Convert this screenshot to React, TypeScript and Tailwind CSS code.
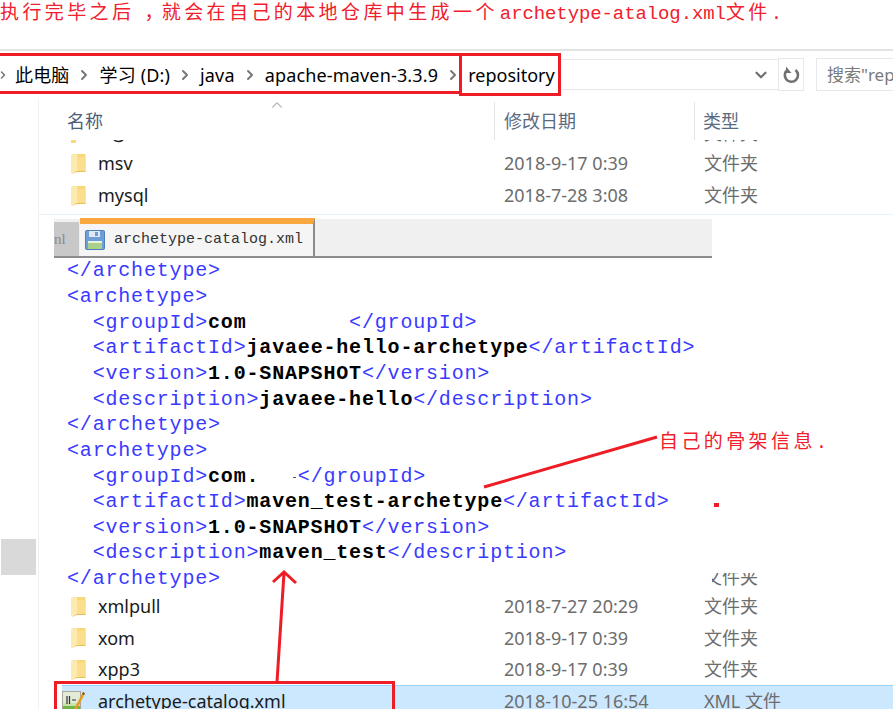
import React from 'react';
import { ChevronDown, ChevronRight, ChevronUp } from 'lucide-react';

const uiFont = "font-['Noto_Sans','Noto_Sans_CJK_SC',sans-serif]";
const noteFont = "font-['Liberation_Mono','Noto_Sans_CJK_SC',monospace]";

const FolderIcon = () => (
  <svg width="15" height="22" viewBox="0 0 15 22" className="shrink-0">
    <path d="M0 2 L3 1 H14.5 V19 H3 Z" fill="#f8d878" />
    <path d="M0 2 L6 1 V18 L1 21 L0 20 Z" fill="#fdeab0" />
    <path d="M6 4 H14.5 V18 H6 Z" fill="#fbdf8f" />
    <path d="M1 21 L6 18 H14.5 V19 H6 Z" fill="#e9bd58" />
  </svg>
);

const XmlIcon = () => (
  <svg width="24" height="24" viewBox="0 0 24 24" className="shrink-0">
    <rect x="0.5" y="1.5" width="18" height="22" fill="#e4ead8" stroke="#a8a89a" />
    <rect x="1" y="16" width="17" height="7" fill="#6db544" />
    <rect x="1" y="13" width="17" height="3" fill="#c9e2a8" />
    <path d="M5 6 V14 M7.5 6 V14 M10 10 H14" stroke="#333" strokeWidth="1.2" />
    <path d="M12 19 L21 2 L23 3.5 L14 21 Z" fill="#e79a24" />
    <path d="M21 2 L23 3.5 L22 5 L20 4 Z" fill="#7a5a2a" />
  </svg>
);

const SaveIcon = () => (
  <svg width="20" height="20" viewBox="0 0 20 20" className="shrink-0">
    <rect x="0.5" y="0.5" width="19" height="19" rx="1" fill="#6f9ed6" stroke="#4f7fb8" />
    <rect x="4" y="1" width="11" height="6" fill="#dfe9f5" />
    <rect x="10" y="2" width="3" height="4" fill="#6f9ed6" />
    <rect x="3" y="11" width="14" height="8" fill="#a9d18c" />
    <rect x="3" y="11" width="14" height="2" fill="#eaf3e0" />
  </svg>
);

const RefreshIcon = () => (
  <svg width="18" height="18" viewBox="0 0 18 18">
    <path d="M6 3.5 A6.6 6.6 0 1 0 13.5 4" stroke="#707070" strokeWidth="2.6" fill="none" />
    <path d="M4 0.5 V7 H9.5 Z" fill="#707070" />
  </svg>
);

type RowProps = { name: string; date: string; type: string; icon?: React.ReactNode };

const FileRow = ({ name, date, type, icon }: RowProps) => (
  <div className="flex items-center h-[31.7px]">
    <div className="w-[47px] shrink-0 flex justify-end">{icon || <FolderIcon />}</div>
    <div className="w-[412px] pl-[12px] text-[18px] text-[#1a1a1a] shrink-0">{name}</div>
    <div className="w-[200px] text-[18px] text-[#6d6d6d] shrink-0 pl-[6px]">{date}</div>
    <div className="text-[18px] text-[#6d6d6d] pl-[6px] whitespace-nowrap">{type}</div>
  </div>
);

const Tag = ({ children }: { children: React.ReactNode }) => <span className="text-[#3a3aff]">{children}</span>;
const Val = ({ children }: { children: React.ReactNode }) => <span className="font-bold text-black">{children}</span>;

const codeLines: React.ReactNode[] = [
  <Tag>{'</archetype>'}</Tag>,
  <Tag>{'<archetype>'}</Tag>,
  <><Tag>{'  <groupId>'}</Tag><Val>{'com'}</Val>{'        '}<Tag>{'</groupId>'}</Tag></>,
  <><Tag>{'  <artifactId>'}</Tag><Val>{'javaee-hello-archetype'}</Val><Tag>{'</artifactId>'}</Tag></>,
  <><Tag>{'  <version>'}</Tag><Val>{'1.0-SNAPSHOT'}</Val><Tag>{'</version>'}</Tag></>,
  <><Tag>{'  <description>'}</Tag><Val>{'javaee-hello'}</Val><Tag>{'</description>'}</Tag></>,
  <Tag>{'</archetype>'}</Tag>,
  <Tag>{'<archetype>'}</Tag>,
  <><Tag>{'  <groupId>'}</Tag><Val>{'com.'}</Val>{'   '}<Tag>{'</groupId>'}</Tag></>,
  <><Tag>{'  <artifactId>'}</Tag><Val>{'maven_test-archetype'}</Val><Tag>{'</artifactId>'}</Tag></>,
  <><Tag>{'  <version>'}</Tag><Val>{'1.0-SNAPSHOT'}</Val><Tag>{'</version>'}</Tag></>,
  <><Tag>{'  <description>'}</Tag><Val>{'maven_test'}</Val><Tag>{'</description>'}</Tag></>,
  <Tag>{'</archetype>'}</Tag>,
];

const Crumb = ({ text }: { text: string }) => (
  <>
    <span className="text-black whitespace-nowrap tracking-[0.16px]">{text}</span>
    <ChevronRight size={16} strokeWidth={3} className="text-[#777] mx-[7px] shrink-0" />
  </>
);

export default function App() {
  return (
    <div className={`relative w-[893px] h-[709px] overflow-hidden bg-white ${uiFont}`}>
      {/* 顶部说明 */}
      <div className={`h-[49px] pt-[1px] text-[#f0202c] text-[19px] leading-[26px] whitespace-nowrap ${noteFont}`}>
        <span className="tracking-[3.4px]">执行完毕之后</span>
        <span className="tracking-[3.4px] ml-[10px]">，</span>
        <span className="tracking-[3.4px] -ml-[5px]">就会在自己的本地仓库中生成一个</span>
        <span className="tracking-[-0.1px] ml-[2px]">archetype-atalog.xml</span>
        <span className="tracking-[3.4px]">文件.</span>
      </div>

      {/* 地址栏 */}
      <div className="h-[50px] border-t-2 border-[#e3e3e3] flex items-center text-[18px]">
        <ChevronRight size={12} strokeWidth={3} className="text-[#777] -ml-[3px] mr-[6px] shrink-0" />
        <Crumb text="此电脑" />
        <Crumb text="学习 (D:)" />
        <Crumb text="java" />
        <Crumb text="apache-maven-3.3.9" />
        <div className="w-[300px] h-[32px] shrink-0 flex items-center">
          <span className="text-black">repository</span>
        </div>
      </div>

      {/* 内容区 */}
      <div className="flex">
        <div className="w-[39px] shrink-0 border-r border-[#f0f0f0] h-[610px] pt-[440px]">
          <div className="ml-[1px] w-[35px] h-[36px] bg-[#d9d9d9]" />
        </div>
        <div className="flex-1 min-w-0">
          {/* 表头 */}
          <div className="relative flex h-[41px] items-center text-[18px] text-[#4c607a] pt-[3px]">
            <div className="w-[455px] pl-[28px]">名称</div>
            <div className="w-[200px] pl-[9px] h-[38px] flex items-center border-l border-[#e5e5e5] text-[#5a6b80]">修改日期</div>
            <div className="pl-[8px] h-[38px] flex items-center border-l border-[#e5e5e5] text-[#5a6b80]">类型</div>
            <ChevronUp size={18} strokeWidth={1.5} className="absolute left-[229px] top-[-3px] text-[#bbbbbb]" />
          </div>
          {/* 被表头遮住的一行 */}
          <div className="flex h-[8px] overflow-hidden">
            <svg width="100" height="8" className="shrink-0 ml-[32px]">
              <rect x="0" y="0" width="5" height="3" fill="#f8d878" />
              <path d="M43 0 Q47 3 52 0" stroke="#222" strokeWidth="1.5" fill="none" />
            </svg>
            <div className="ml-[533px] text-[18px] leading-[18px] -mt-[16px] text-[#6d6d6d]">文件夹</div>
          </div>
          <FileRow name="msv" date="2018-9-17 0:39" type="文件夹" />
          <FileRow name="mysql" date="2018-7-28 3:08" type="文件夹" />
          <div className="h-[4px] border-b border-[#e8f2fb]" />
          <div className="h-[4px]" />

          {/* 编辑器 */}
          <div className="flex -mb-[1px]">
            <div className="relative z-10 ml-[15px] w-[658px] shrink-0">
              <div className="flex h-[39px] bg-[#f0f0f0] border-b-2 border-[#8c8c8c] items-end">
                <div className="w-[25px] h-[34px] bg-[#c8c8c8] text-[#8a8a8a] text-[15px] flex items-center font-['Liberation_Serif',serif]">nl</div>
                <div className="ml-[1px] w-[235px] h-[38px] bg-[#f5f5f5] border-t-[6px] border-[#f9a73e] border-r-2 border-r-[#8c8c8c] flex items-center pl-[5px] gap-[9px]">
                  <SaveIcon />
                  <span className={`text-[15px] text-[#333] ${noteFont}`}>archetype-catalog.xml</span>
                </div>
              </div>
              <div className="bg-white pl-[13px]">
                {codeLines.map((line, i) => (
                  <div key={i} className="relative h-[25.65px] leading-[25.65px] whitespace-pre text-[20px] tracking-[0.82px] font-['Liberation_Mono',monospace]">
                    {line}
                    {i === 8 && <span className="absolute left-[226px] top-[13px] w-[3px] h-[1px] bg-[#555]" />}
                  </div>
                ))}
              </div>
            </div>
            <div className="flex-1 flex flex-col justify-end items-start pb-[6px]">
              <div className="h-[13px] overflow-hidden -ml-[8px] whitespace-nowrap">
                <div className="text-[18px] leading-[18px] -mt-[5px] text-[#6d6d6d]">文件夹</div>
              </div>
            </div>
          </div>

          <FileRow name="xmlpull" date="2018-7-27 20:29" type="文件夹" />
          <FileRow name="xom" date="2018-9-17 0:39" type="文件夹" />
          <FileRow name="xpp3" date="2018-9-17 0:39" type="文件夹" />
          <div className="relative">
            <div className="absolute left-[23px] right-0 -top-[1px] h-[40px] bg-[#cce8ff] border-t border-[#99d1ff]" />
            <div className="relative">
              <FileRow name="archetype-catalog.xml" date="2018-10-25 16:54" type="XML 文件" icon={<XmlIcon />} />
            </div>
          </div>
        </div>
      </div>

      {/* 搜索框、刷新按钮 */}
      <div className="absolute left-[562px] top-[59px] w-[217px] h-[31px] border border-[#e8e8e8] border-l-0 flex items-center justify-end pr-[8px]">
        <ChevronDown size={18} strokeWidth={3} className="text-[#707070]" />
      </div>
      <div className="absolute left-[778px] top-[58px] w-[26px] h-[33px] border border-[#e8e8e8] flex items-center justify-center">
        <RefreshIcon />
      </div>
      <div className="absolute left-[816px] top-[58px] w-[90px] h-[33px] border border-[#e8e8e8] flex items-center pl-[10px] text-[17px] text-[#7a7a7a] whitespace-nowrap">
        搜索"rep
      </div>

      {/* 红框和箭头 */}
      <div className="absolute z-20 left-[-4px] top-[53px] w-[464px] h-[41px] border-y-[3px] border-[#ee1c25]" />
      <div className="absolute z-20 left-[459px] top-[53px] w-[102px] h-[43px] border-[3px] border-[#ee1c25]" />
      <div className="absolute z-20 left-[54px] top-[681px] w-[341px] h-[40px] border-[3px] border-[#ee1c25]" />
      <div className={`absolute z-20 left-[659px] top-[430px] text-[#f0202c] text-[19px] tracking-[3.4px] leading-[26px] whitespace-nowrap ${noteFont}`}>自己的骨架信息.</div>
      <div className="absolute z-20 left-[714px] top-[503px] w-[5px] h-[4px] bg-[#ee1c25]" />
      <svg className="absolute z-20 left-0 top-0 pointer-events-none" width="893" height="709">
        <path d="M484 487 L657 437" stroke="#ee1c25" strokeWidth="3" fill="none" />
        <path d="M277 682 L284 573 M273 582 L284 572 L296 583" stroke="#ee1c25" strokeWidth="3" fill="none" />
      </svg>
    </div>
  );
}
